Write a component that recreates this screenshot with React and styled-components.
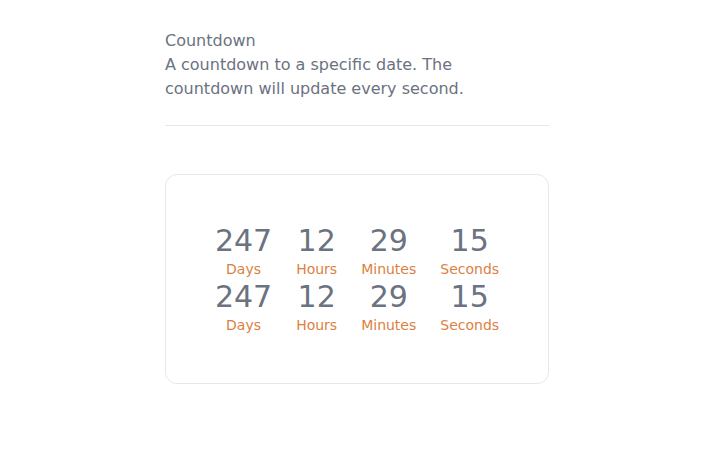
import React from 'react';
import styled, { createGlobalStyle } from 'styled-components';

// --- Colours ---
const TEXT_GRAY = '#6b7280';
const BORDER = '#e5e7eb';
const ACCENT = '#dd803f';

const GlobalStyle = createGlobalStyle`
  body {
    margin: 0;
    background: #ffffff;
    font-family: "DejaVu Sans", sans-serif;
  }
`;

const Page = styled.div`
  width: 384px;
  margin: 0 auto;
  padding: 29px 0 0 12px;
`;

const Header = styled.header`
  color: ${TEXT_GRAY};
  font-size: 16px;
  line-height: 24px;
  padding-bottom: 24px;
  border-bottom: 1px solid ${BORDER};
`;

const Title = styled.h1`
  margin: 0;
  font-size: inherit;
  font-weight: normal;
`;

const Description = styled.p`
  margin: 0;
  max-width: 320px;
`;

const Card = styled.div`
  margin-top: 48px;
  border: 1px solid ${BORDER};
  border-radius: 12px;
  padding: 48px 0;
  display: flex;
  flex-direction: column;
  align-items: center;
`;

const Row = styled.div`
  display: flex;
  justify-content: center;
  gap: 24px;
`;

const Unit = styled.div`
  display: flex;
  flex-direction: column;
  align-items: center;
`;

const Value = styled.span`
  font-size: 30px;
  line-height: 36px;
  color: ${TEXT_GRAY};
`;

const Label = styled.span`
  font-size: 14px;
  line-height: 20px;
  color: ${ACCENT};
`;

const Countdown = ({ values }) => (
  <Row>
    {values.map((v) => (
      <Unit key={v.label}>
        <Value>{v.value}</Value>
        <Label>{v.label}</Label>
      </Unit>
    ))}
  </Row>
);

const App = () => {
  const values = [
    { value: 247, label: 'Days' },
    { value: 12, label: 'Hours' },
    { value: 29, label: 'Minutes' },
    { value: 15, label: 'Seconds' },
  ];

  return (
    <>
      <GlobalStyle />
      <Page>
        <Header>
          <Title>Countdown</Title>
          <Description>
            A countdown to a specific date. The countdown will update every second.
          </Description>
        </Header>
        <Card>
          <Countdown values={values} />
          <Countdown values={values} />
        </Card>
      </Page>
    </>
  );
};

export default App;
